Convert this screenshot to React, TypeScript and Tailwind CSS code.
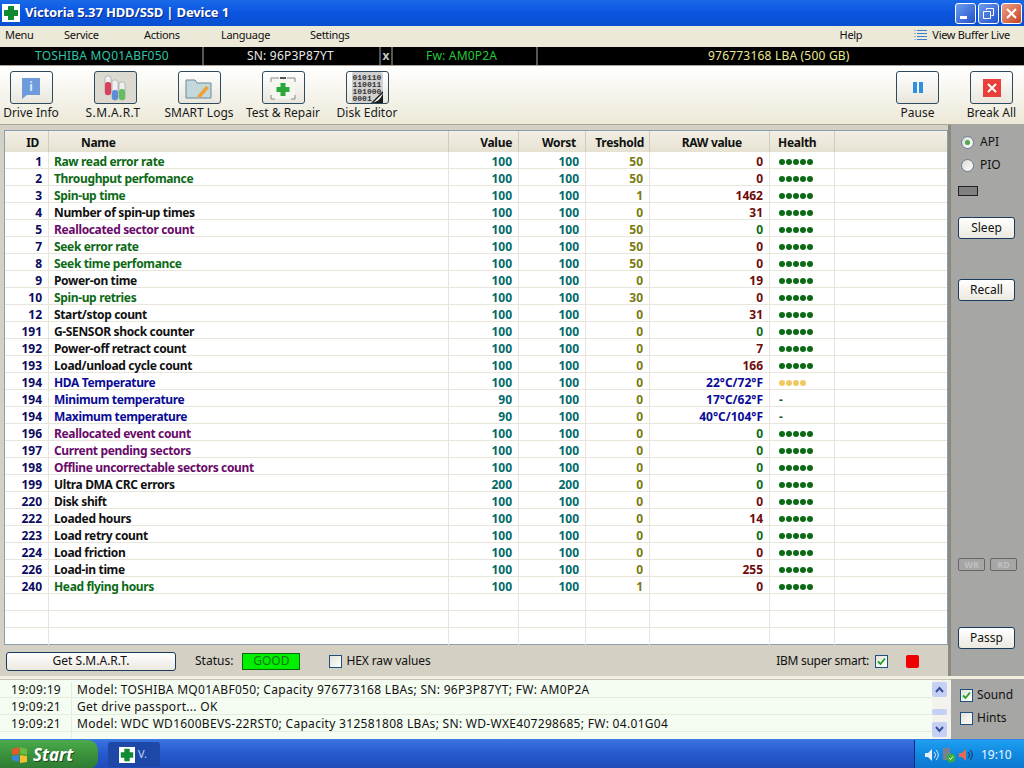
import type { ReactNode } from "react";

type Tone = "green" | "black" | "purple" | "blue";
type Row = {
  id: number;
  name: string;
  tone: Tone;
  value: number;
  worst: number;
  tresh: number;
  raw: string;
  rawTone: "red" | "green" | "blue";
  health: "ok" | "warn" | "none";
};

const nameTone = {
  green: "text-[#0b6a14]",
  black: "text-[#111111]",
  purple: "text-[#6a0a6a]",
  blue: "text-[#0a0a96]",
};
const rawTone = {
  red: "text-[#6e0a0a]",
  green: "text-[#0b6a14]",
  blue: "text-[#0a0a96]",
};

const r = (
  id: number,
  name: string,
  tone: Tone,
  tresh: number,
  raw: string,
  tn: Row["rawTone"] = "red",
  value = 100,
  worst = 100,
  health: Row["health"] = "ok",
): Row => ({ id, name, tone, value, worst, tresh, raw, rawTone: tn, health });

const rows: Row[] = [
  r(1, "Raw read error rate", "green", 50, "0"),
  r(2, "Throughput perfomance", "green", 50, "0"),
  r(3, "Spin-up time", "green", 1, "1462"),
  r(4, "Number of spin-up times", "black", 0, "31"),
  r(5, "Reallocated sector count", "purple", 50, "0", "green"),
  r(7, "Seek error rate", "green", 50, "0"),
  r(8, "Seek time perfomance", "green", 50, "0"),
  r(9, "Power-on time", "black", 0, "19"),
  r(10, "Spin-up retries", "green", 30, "0"),
  r(12, "Start/stop count", "black", 0, "31"),
  r(191, "G-SENSOR shock counter", "black", 0, "0", "green"),
  r(192, "Power-off retract count", "black", 0, "7"),
  r(193, "Load/unload cycle count", "black", 0, "166"),
  r(194, "HDA Temperature", "blue", 0, "22°C/72°F", "blue", 100, 100, "warn"),
  r(194, "Minimum temperature", "blue", 0, "17°C/62°F", "blue", 90, 100, "none"),
  r(194, "Maximum temperature", "blue", 0, "40°C/104°F", "blue", 90, 100, "none"),
  r(196, "Reallocated event count", "purple", 0, "0", "green"),
  r(197, "Current pending sectors", "purple", 0, "0", "green"),
  r(198, "Offline uncorrectable sectors count", "purple", 0, "0", "green"),
  r(199, "Ultra DMA CRC errors", "black", 0, "0", "green", 200, 200),
  r(220, "Disk shift", "black", 0, "0"),
  r(222, "Loaded hours", "black", 0, "14"),
  r(223, "Load retry count", "black", 0, "0", "green"),
  r(224, "Load friction", "black", 0, "0"),
  r(226, "Load-in time", "black", 0, "255"),
  r(240, "Head flying hours", "green", 1, "0"),
];

const gridCols = "grid grid-cols-[44px_400px_70px_67px_64px_120px_65px_1fr]";
const line = "border-r border-[#e8e6da]";
const headCell = "h-[21px] border-r border-[#cfccbc] leading-[24px]";

function Cross({ size = 18 }: { size?: number }) {
  return (
    <svg width={size} height={size} viewBox="0 0 18 18" className="shrink-0">
      <rect width="18" height="18" fill="#ffffff" />
      <path d="M6 2h6v4h4v6h-4v4H6v-4H2V6h4z" fill="#128a34" />
    </svg>
  );
}

function ToolButton({ label, icon, pressed, w, tight }: { label: string; icon: ReactNode; pressed?: boolean; w: string; tight?: string }) {
  return (
    <div className={`flex flex-col items-center ${w}`}>
      <div
        className={`flex h-[33px] w-[43px] items-center justify-center rounded-[3px] border border-[#2d4a5e] ${
          pressed ? "bg-[#dcd9d0]" : "bg-gradient-to-b from-white to-[#e8e6dc]"
        }`}
      >
        {icon}
      </div>
      <span className={`mt-[1px] whitespace-nowrap text-[12px] leading-[15px] text-[#1a1a1a] ${tight ?? ""}`}>{label}</span>
    </div>
  );
}

function Dots({ health }: { health: Row["health"] }) {
  if (health === "none") return <span className="pl-[9px] text-[#1d5a30]">-</span>;
  const warn = health === "warn";
  return (
    <div className="flex h-full items-center gap-[1px] pt-[3px] pl-[9px]">
      {(warn ? [1, 2, 3, 4] : [1, 2, 3, 4, 5]).map((i) => (
        <span key={i} className={`size-[6px] rounded-full ${warn ? "bg-[#f0c860]" : "bg-[#0b6a14]"}`} />
      ))}
    </div>
  );
}

function XpButton({ children, className = "" }: { children: ReactNode; className?: string }) {
  return (
    <div
      className={`flex items-center justify-center rounded-[3px] border border-[#1c3a5c] bg-gradient-to-b from-white to-[#ece9e0] text-[12px] text-[#111111] ${className}`}
    >
      {children}
    </div>
  );
}

function Check({ on }: { on?: boolean }) {
  return (
    <div className="flex size-[13px] shrink-0 items-center justify-center border border-[#1c5180] bg-gradient-to-br from-[#e4e2d8] to-white">
      {on && (
        <svg width="9" height="9" viewBox="0 0 9 9">
          <path d="M1 4.5 3.5 7 8 1.5" fill="none" stroke="#21a121" strokeWidth="1.8" />
        </svg>
      )}
    </div>
  );
}

function Radio({ on }: { on?: boolean }) {
  return (
    <div className="flex size-[13px] items-center justify-center rounded-full border border-[#6a7f95] bg-gradient-to-br from-[#dcdad0] to-white">
      {on && <span className="size-[5px] rounded-full bg-[#4da84d]" />}
    </div>
  );
}

function WinButton({ children, close }: { children: ReactNode; close?: boolean }) {
  return (
    <div
      className={`flex size-[21px] items-center justify-center rounded-[3px] border border-white ${
        close ? "bg-gradient-to-br from-[#e8a088] to-[#c8401c]" : "bg-gradient-to-br from-[#6f9cf0] to-[#2250c8]"
      }`}
    >
      {children}
    </div>
  );
}

export default function App() {
  return (
    <div className="flex h-[768px] w-[1024px] flex-col overflow-hidden bg-[#ece9d8] font-['Noto_Sans',sans-serif] text-[11px]">
      {/* title bar */}
      <div className="flex h-[26px] shrink-0 items-center bg-gradient-to-b from-[#1a6ae8] via-[#0a54e0] to-[#0850d0] pl-[2px] pr-[2px]">
        <Cross />
        <span className="ml-[5px] text-[13px] font-bold tracking-[-0.15px] text-white [text-shadow:1px_1px_#0a2a80]">
          Victoria 5.37 HDD/SSD | Device 1
        </span>
        <div className="ml-auto flex gap-[2px]">
          <WinButton>
            <span className="mt-[9px] mr-[5px] h-[3px] w-[7px] bg-white" />
          </WinButton>
          <WinButton>
            <svg width="13" height="13" viewBox="0 0 13 13" fill="none" stroke="#ffffff">
              <path d="M4.5 3V1.5h7v7H9.5M1.5 4.5h7v7h-7z" />
            </svg>
          </WinButton>
          <WinButton close>
            <svg width="13" height="13" viewBox="0 0 13 13" stroke="#ffffff" strokeWidth="2">
              <path d="M2 2l9 9M11 2l-9 9" />
            </svg>
          </WinButton>
        </div>
      </div>

      {/* menu */}
      <div className="flex h-[21px] shrink-0 items-center pb-[2px] tracking-[-0.3px] text-[#111111]">
        <span className="ml-[5px] w-[59px]">Menu</span>
        <span className="w-[80px]">Service</span>
        <span className="w-[77px]">Actions</span>
        <span className="w-[89px]">Language</span>
        <span>Settings</span>
        <span className="ml-auto">Help</span>
        <svg width="13" height="13" viewBox="0 0 13 13" className="ml-[52px]" stroke="#3b7fd0">
          <path d="M3 1.5h10M3 4.5h10M3 7.5h10M3 10.5h10" />
          <path d="M0 1.5h2M0 4.5h2M0 7.5h2M0 10.5h2" stroke="#90b8e8" />
        </svg>
        <span className="ml-[5px] mr-[14px]">View Buffer Live</span>
      </div>

      {/* device bar */}
      <div className="flex h-[18px] shrink-0 items-center bg-black text-[12px] tracking-[0.2px]">
        <span className="w-[202px] pl-[35px] text-[#2fc4a8]">TOSHIBA MQ01ABF050</span>
        <span className="h-full w-[2px] bg-[#555555]" />
        <span className="w-[175px] pl-[43px] text-[#e8e8e8]">SN: 96P3P87YT</span>
        <span className="flex h-full w-[14px] items-center justify-center border-x-2 border-[#555555] font-bold text-[#c8c8c8]">x</span>
        <span className="w-[143px] pl-[33px] text-[#22c838]">Fw: AM0P2A</span>
        <span className="h-full w-[2px] bg-[#555555]" />
        <span className="pl-[170px] text-[#e8e890]">976773168 LBA (500 GB)</span>
      </div>

      {/* toolbar */}
      <div className="flex h-[60px] shrink-0 items-start border-y border-[#a8a69a] bg-gradient-to-b from-white to-[#ece9d8] pt-[5px] text-[#111111]">
        <ToolButton
          w="w-[62px]"
          label="Drive Info"
          icon={
            <svg width="24" height="24" viewBox="0 0 24 24">
              <path d="M3 2h18v17H8l-5 4z" fill="#6d9bdc" />
              <text x="12" y="15" textAnchor="middle" fontSize="12" fontWeight="700" fill="#dfeaf8">i</text>
            </svg>
          }
        />
        <ToolButton
          w="w-[84px] ml-[11px]"
          pressed
          tight="tracking-[0.4px] -translate-x-[2px]"
          label="S.M.A.R.T"
          icon={
            <svg width="24" height="26" viewBox="0 0 24 26">
              <rect x="2" y="1" width="6" height="19" rx="2.5" fill="#f0f0f0" stroke="#8a8a8a" strokeWidth="0.5" />
              <rect x="2" y="7" width="6" height="13" rx="2.5" fill="#d8405a" />
              <rect x="9" y="5" width="6" height="20" rx="2.5" fill="#f0f0f0" stroke="#8a8a8a" strokeWidth="0.5" />
              <rect x="9" y="15" width="6" height="10" rx="2.5" fill="#5a8cd8" />
              <rect x="16" y="7" width="6" height="18" rx="2.5" fill="#f0f0f0" stroke="#8a8a8a" strokeWidth="0.5" />
              <rect x="16" y="14" width="6" height="11" rx="2.5" fill="#60c060" />
            </svg>
          }
        />
        <ToolButton
          w="w-[84px]"
          label="SMART Logs"
          icon={
            <svg width="30" height="26" viewBox="0 0 30 26">
              <path d="M2 5h9l2 3h14v15H2z" fill="#c4d8dc" stroke="#6a8a9a" />
              <path d="M14 20l8-9 3 2-8 9-4 1z" fill="#f0a030" />
            </svg>
          }
        />
        <ToolButton
          w="w-[84px]"
          label="Test & Repair"
          icon={
            <svg width="30" height="26" viewBox="0 0 30 26">
              <rect x="3" y="3" width="24" height="21" fill="#f6f6f0" />
              <path d="M3 7V3h8M27 7V3h-8M3 20v4h4M27 20v4h-4" fill="none" stroke="#888888" />
              <path d="M12 3h6" stroke="#555555" strokeWidth="2" />
              <path d="M12.5 8h5v4h4v5h-4v4h-5v-4h-4v-5h4z" fill="#2aa83a" />
            </svg>
          }
        />
        <ToolButton
          w="w-[84px]"
          label="Disk Editor"
          icon={
            <div className="relative flex h-[31px] w-[31px] flex-col rounded-[2px] bg-[#d0d0d0] px-[1px] py-[2px] text-left font-['Liberation_Mono',monospace] text-[8px] leading-[7px] font-bold text-[#333333]">
              <span>010110</span>
              <span>110011</span>
              <span>101000</span>
              <span>0001</span>
              <svg width="12" height="12" viewBox="0 0 12 12" className="absolute right-0 bottom-0">
                <path d="M12 0v12H0z" fill="#1a1a1a" />
                <path d="M12 2 2 12H1C6 11 10 8 12 2z" fill="#f4f4f4" />
              </svg>
            </div>
          }
        />
        <div className="ml-auto flex items-start">
          <ToolButton
            w="w-[43px]"
            label="Pause"
            icon={
              <div className="flex gap-[2px]">
                <span className="h-[11px] w-[4px] bg-[#2e90e0]" />
                <span className="h-[11px] w-[4px] bg-[#2e90e0]" />
              </div>
            }
          />
          <div className="w-[31px]" />
          <ToolButton
            w="w-[43px]"
            label="Break All"
            icon={
              <div className="flex size-[18px] items-center justify-center bg-[#e8403a]">
                <svg width="10" height="10" viewBox="0 0 10 10" stroke="#ffffff" strokeWidth="2">
                  <path d="M1 1l8 8M9 1l-8 8" />
                </svg>
              </div>
            }
          />
          <div className="w-[11px]" />
        </div>
      </div>

      {/* main */}
      <div className="flex h-[551px] shrink-0">
        <div className="flex w-[952px] flex-col border-r-[3px] border-[#8a8a80] bg-[#d4d0c4]">
          <div className="mt-[5px] ml-[4px] flex h-[515px] w-[944px] flex-col border border-[#8aa0ae] bg-white">
            <div className={`${gridCols} h-[21px] shrink-0 bg-gradient-to-b from-[#f2efe4] to-[#e6e2d2] text-[12px] font-bold tracking-[-0.3px] text-[#111111]`}>
              <span className={`${headCell} pr-[9px] text-right`}>ID</span>
              <span className={`${headCell} pl-[32px]`}>Name</span>
              <span className={`${headCell} pr-[6px] text-right`}>Value</span>
              <span className={`${headCell} pr-[9px] text-right`}>Worst</span>
              <span className={`${headCell} pr-[5px] text-right`}>Treshold</span>
              <span className={`${headCell} pr-[27px] text-right`}>RAW value</span>
              <span className={`${headCell} pl-[8px]`}>Health</span>
              <span />
            </div>
            {rows.map((row, i) => (
              <div key={i} className={`${gridCols} h-[17px] shrink-0 border-b border-[#e8e6da] text-[12px] font-bold leading-[20px]`}>
                <span className={`h-[16px] ${line} pr-[6px] text-right text-[#0a0a60]`}>{row.id}</span>
                <span className={`h-[16px] ${line} pl-[5px] tracking-[-0.35px] ${nameTone[row.tone]}`}>{row.name}</span>
                <span className={`h-[16px] ${line} pr-[6px] text-right text-[#006a6a]`}>{row.value}</span>
                <span className={`h-[16px] ${line} pr-[6px] text-right text-[#006a6a]`}>{row.worst}</span>
                <span className={`h-[16px] ${line} pr-[6px] text-right text-[#7a7a10]`}>{row.tresh}</span>
                <span className={`h-[16px] ${line} pr-[6px] text-right ${rawTone[row.rawTone]}`}>{row.raw}</span>
                <span className={`h-[16px] ${line}`}>
                  <Dots health={row.health} />
                </span>
                <span />
              </div>
            ))}
            {[0, 1, 2].map((i) => (
              <div key={i} className={`${gridCols} h-[17px] shrink-0 border-b border-[#e8e6da] last:border-b-0`}>
                {[0, 1, 2, 3, 4, 5, 6].map((c) => (
                  <span key={c} className={`h-full ${line}`} />
                ))}
              </div>
            ))}
          </div>
          <div className="flex h-[28px] shrink-0 items-center pt-[4px] text-[12px] text-[#111111]">
            <XpButton className="ml-[6px] h-[19px] w-[170px]">Get S.M.A.R.T.</XpButton>
            <span className="ml-[19px]">Status:</span>
            <div className="ml-[9px] flex h-[17px] w-[58px] items-center justify-center border border-[#0a6a0a] bg-[#00f000] text-[#117711]">GOOD</div>
            <div className="ml-[29px]">
              <Check />
            </div>
            <span className="ml-[4px] tracking-[-0.1px]">HEX raw values</span>
            <span className="ml-auto tracking-[-0.3px]">IBM super smart:</span>
            <div className="ml-[6px]">
              <Check on />
            </div>
            <span className="ml-[18px] mr-[29px] size-[13px] rounded-[2px] bg-[#ee0000]" />
          </div>
        </div>
        <div className="flex flex-1 flex-col bg-[#a6a6a4] pl-[7px] pr-[7px] text-[12px] text-[#111111]">
          <div className="mt-[8px] flex items-center gap-[6px] pl-[3px]">
            <Radio on />
            <span>API</span>
          </div>
          <div className="mt-[5px] flex items-center gap-[6px] pl-[3px]">
            <Radio />
            <span>PIO</span>
          </div>
          <div className="mt-[12px] h-[10px] w-[20px] border border-[#222222] bg-[#808080]" />
          <XpButton className="mt-[21px] h-[22px] w-[57px]">Sleep</XpButton>
          <XpButton className="mt-[40px] h-[22px] w-[57px]">Recall</XpButton>
          <div className="mt-[257px] flex gap-[5px]">
            <div className="flex h-[13px] w-[27px] items-center justify-center rounded-[2px] border border-[#666666] text-[9px] font-bold text-[#c0c0c0]">WR</div>
            <div className="flex h-[13px] w-[27px] items-center justify-center rounded-[2px] border border-[#666666] text-[9px] font-bold text-[#c0c0c0]">RD</div>
          </div>
          <XpButton className="mt-[56px] h-[22px] w-[57px]">Passp</XpButton>
        </div>
      </div>

      {/* log */}
      <div className="flex h-[63px] shrink-0 border-t-[3px] border-[#f2eee0] bg-[#a6a6a4]">
        <div className="flex w-[951px] border-t border-[#c4c4b8] bg-[#f5fcf2]">
          <div className="flex-1 overflow-hidden pt-[1px] text-[12px] tracking-[0.3px] text-[#111111]">
            {[
              ["19:09:19", "Model: TOSHIBA MQ01ABF050; Capacity 976773168 LBAs; SN: 96P3P87YT; FW: AM0P2A"],
              ["19:09:21", "Get drive passport... OK"],
              ["19:09:21", "Model: WDC WD1600BEVS-22RST0; Capacity 312581808 LBAs; SN: WD-WXE407298685; FW: 04.01G04"],
            ].map(([time, text], i) => (
              <div key={i} className="flex h-[17px] items-center border-b border-[#e4ecde] pt-[2px]">
                <span className="w-[72px] border-r border-[#e4ecde] pl-[11px] leading-[16px]">{time}</span>
                <span className="pl-[5px]">{text}</span>
              </div>
            ))}
            <div className="flex h-[6px]">
              <span className="w-[72px] border-r border-[#e4ecde]" />
            </div>
          </div>
          <div className="flex w-[19px] flex-col bg-[#f3f3ee] py-[2px]">
            <div className="flex size-[15px] items-center justify-center rounded-[2px] bg-[#c4d0f4]">
              <svg width="9" height="7" viewBox="0 0 9 7" fill="none" stroke="#3a4e9a" strokeWidth="2">
                <path d="M1 6l3.5-4L8 6" />
              </svg>
            </div>
            <div className="mt-[12px] h-[6px] w-[15px] rounded-[2px] bg-[#c4d0f4]" />
            <div className="mt-auto flex size-[15px] items-center justify-center rounded-[2px] bg-[#c4d0f4]">
              <svg width="9" height="7" viewBox="0 0 9 7" fill="none" stroke="#3a4e9a" strokeWidth="2">
                <path d="M1 1l3.5 4L8 1" />
              </svg>
            </div>
          </div>
        </div>
        <div className="flex flex-1 flex-col pl-[9px] text-[12px] text-[#111111]">
          <div className="mt-[7px] flex items-center gap-[4px]">
            <Check on />
            <span>Sound</span>
          </div>
          <div className="mt-[5px] flex items-center gap-[4px]">
            <Check />
            <span>Hints</span>
          </div>
        </div>
      </div>

      {/* taskbar */}
      <div className="flex h-[30px] shrink-0 items-center border-t border-[#3a80e8] bg-gradient-to-b from-[#3a72e0] via-[#2458cc] to-[#1e4cb8] text-white">
        <div className="flex h-full w-[98px] items-center rounded-r-[10px] bg-gradient-to-b from-[#4caa4c] via-[#3a923a] to-[#2e7a34] pl-[10px]">
          <svg width="20" height="20" viewBox="0 0 20 20">
            <path d="M2 4l7-2v7l-7 1z" fill="#e8582a" />
            <path d="M10 2l7 2v6l-7-1z" fill="#6cba3c" />
            <path d="M2 11l7-1v7l-7-2z" fill="#3c84e0" />
            <path d="M10 10l7 1v6l-7 1z" fill="#f4c030" />
          </svg>
          <span className="ml-[3px] text-[17px] font-bold italic [text-shadow:1px_1px_#1a4a1a]">Start</span>
        </div>
        <div className="ml-[10px] flex h-[25px] w-[52px] items-center rounded-[3px] bg-[#1e48a8] pl-[11px] text-[11px] text-[#c8d8f8]">
          <Cross size={16} />
          <span className="ml-[3px]">V.</span>
        </div>
        <div className="ml-auto flex h-full w-[110px] items-center border-l border-[#0a2a80] bg-gradient-to-b from-[#1ea0f0] via-[#1088e0] to-[#0c78d0] pl-[9px] text-[12px] text-[#f0f6ff]">
          <svg width="16" height="16" viewBox="0 0 16 16">
            <path d="M1 6h3l4-4v12l-4-4H1z" fill="#e8eef8" />
            <path d="M10 5c2 2 2 4 0 6M12 3c3 3 3 7 0 10" fill="none" stroke="#e8eef8" />
          </svg>
          <svg width="16" height="16" viewBox="0 0 16 16" className="ml-[1px]">
            <rect x="2" y="1" width="7" height="12" fill="#7a8090" />
            <circle cx="10" cy="11" r="4.5" fill="#3cae40" />
            <path d="M8 11l1.5 1.5L12 9.5" fill="none" stroke="#ffffff" />
          </svg>
          <svg width="16" height="16" viewBox="0 0 16 16" className="ml-[1px]">
            <path d="M1 6h3l4-4v12l-4-4H1z" fill="#e86a50" />
            <path d="M10 5c2 2 2 4 0 6M12 3c3 3 3 7 0 10" fill="none" stroke="#1a2a50" />
          </svg>
          <span className="ml-[7px]">19:10</span>
        </div>
      </div>
    </div>
  );
}
